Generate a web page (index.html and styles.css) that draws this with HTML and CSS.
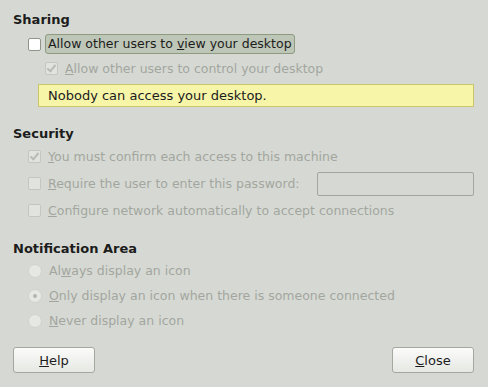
FILE: index.html
```html
<!DOCTYPE html>
<html lang="en">
<head>
  <meta charset="UTF-8" />
  <title>Remote Desktop Preferences</title>
  <link rel="stylesheet" href="styles.css">
</head>
<body>
  <div class="dialog">
    <div class="section sharing">
      <h3>Sharing</h3>
      <div class="row">
        <span class="check"></span>
        <span class="focus-label">Allow other users to <u>v</u>iew your desktop</span>
      </div>
      <div class="row sub disabled">
        <span class="check checked"></span>
        <span><u>A</u>llow other users to control your desktop</span>
      </div>
      <div class="notice">Nobody can access your desktop.</div>
    </div>

    <div class="section security">
      <h3>Security</h3>
      <div class="row disabled">
        <span class="check checked"></span>
        <span><u>Y</u>ou must confirm each access to this machine</span>
      </div>
      <div class="row disabled">
        <span class="check"></span>
        <span><u>R</u>equire the user to enter this password:</span>
        <span class="entry"></span>
      </div>
      <div class="row disabled">
        <span class="check"></span>
        <span><u>C</u>onfigure network automatically to accept connections</span>
      </div>
    </div>

    <div class="section notify">
      <h3>Notification Area</h3>
      <div class="row disabled">
        <span class="radio"></span>
        <span>Al<u>w</u>ays display an icon</span>
      </div>
      <div class="row disabled">
        <span class="radio on"></span>
        <span><u>O</u>nly display an icon when there is someone connected</span>
      </div>
      <div class="row disabled">
        <span class="radio"></span>
        <span><u>N</u>ever display an icon</span>
      </div>
    </div>

    <div class="buttons">
      <button class="btn"><u>H</u>elp</button>
      <button class="btn"><u>C</u>lose</button>
    </div>
  </div>
</body>
</html>
```

FILE: styles.css
```css
body {
  margin: 0;
  background: #d6d9d3;
  font-family: "DejaVu Sans", sans-serif;
  font-size: 12.5px;
  color: #1c1c1c;
}

.dialog {
  padding: 11px 14px 0 13px;
}

h3 {
  margin: 0;
  font-size: 13px;
  font-weight: bold;
  line-height: 18px;
}

.row {
  display: flex;
  align-items: center;
  height: 25px;
  padding-left: 15px;
  gap: 7px;
}

.row.sub {
  padding-left: 32px;
}

/* per-section spacing */
.sharing h3 {
  margin-bottom: 3px;
}

.sharing .row {
  height: 24px;
}

.security {
  margin-top: 18px;
}

.security .row {
  height: 27px;
}

.notify {
  margin-top: 16px;
}

.disabled {
  color: #a3a69f;
}

.check {
  width: 11px;
  height: 11px;
  border: 1px solid #8f958b;
  border-radius: 2px;
  background: #ffffff;
  position: relative;
  flex: none;
}

.disabled .check {
  border-color: #c3c7bf;
  background: #e1e4de;
}

.check.checked::after {
  content: "";
  position: absolute;
  left: 3px;
  top: 0;
  width: 3px;
  height: 7px;
  border: solid #b8bcb4;
  border-width: 0 2px 2px 0;
  transform: rotate(40deg);
}

.focus-label {
  background: #bec6b7;
  border: 1px solid #8d9b80;
  border-radius: 3px;
  padding: 1px 2px;
  margin-left: -3px;
  line-height: 16px;
}

.notice {
  margin: 4px 0 0 25px;
  background: #f6f5a8;
  border: 1px solid #c9c66a;
  padding: 3px 9px;
  line-height: 15px;
  font-size: 13px;
}

.entry {
  margin-left: auto;
  width: 155px;
  height: 22px;
  border: 1px solid #a2a79e;
  border-radius: 2px;
}

.radio {
  width: 12px;
  height: 12px;
  border-radius: 50%;
  background: #e6e8e3;
  border: 1px solid #cfd3cb;
  position: relative;
  flex: none;
}

.radio.on::after {
  content: "";
  position: absolute;
  left: 4px;
  top: 4px;
  width: 4px;
  height: 4px;
  border-radius: 50%;
  background: #b2b6ad;
}

.buttons {
  display: flex;
  justify-content: space-between;
  margin-top: 14px;
}

.btn {
  width: 82px;
  height: 26px;
  font-family: inherit;
  font-size: 13px;
  color: #1c1c1c;
  background: linear-gradient(#fbfbfa, #e6e8e3);
  border: 1px solid #a4a9a0;
  border-radius: 3px;
}
```
